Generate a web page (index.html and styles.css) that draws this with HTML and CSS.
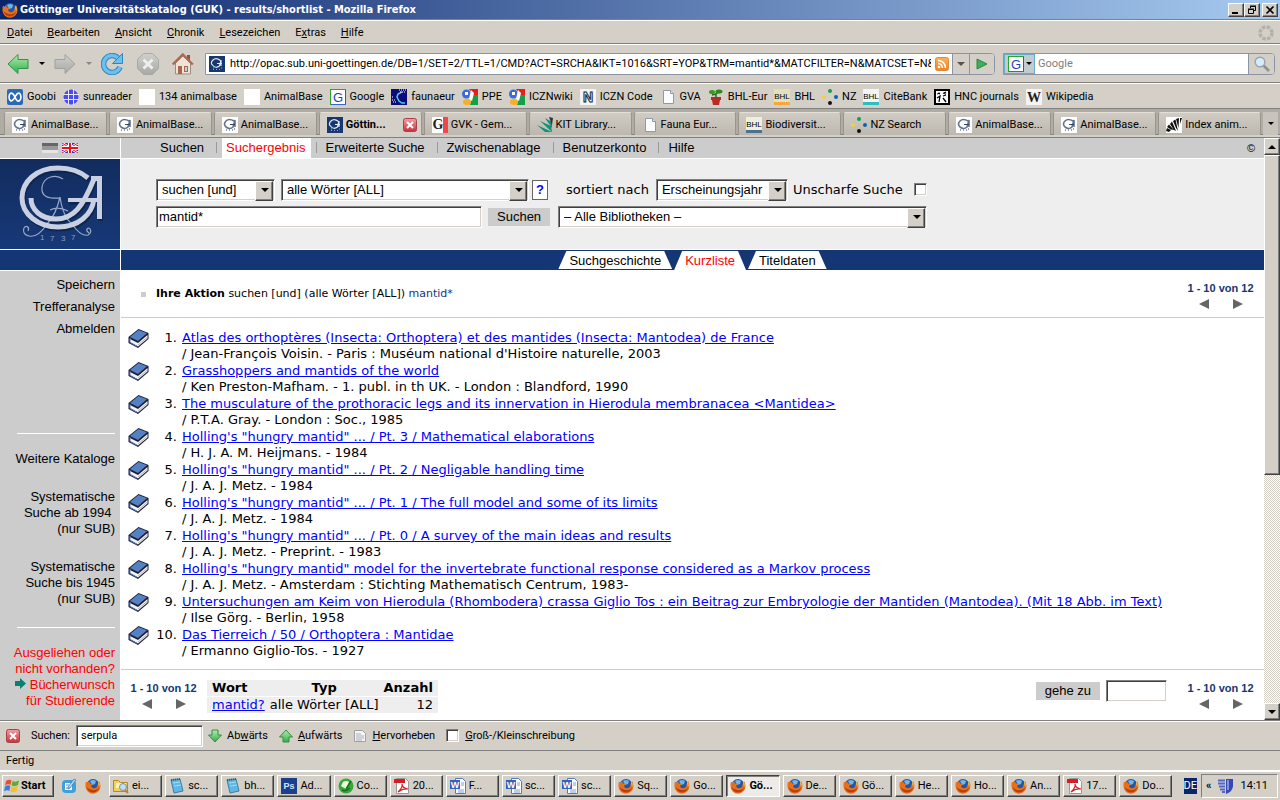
FILE: index.html
```html
<!doctype html>
<html lang="de">
  <head>
    <meta charset="utf-8">
    <title>Göttinger Universitätskatalog (GUK) - results/shortlist</title>
    <link rel="stylesheet" href="styles.css">
  </head>
  <body>
    <svg class="symbols" aria-hidden="true">
      <defs>
        <linearGradient id="g-green" x1="0" y1="0" x2="0" y2="1"><stop offset="0" stop-color="#b5ecb0"/><stop offset="1" stop-color="#2fae4a"/></linearGradient>
        <linearGradient id="g-gray" x1="0" y1="0" x2="0" y2="1"><stop offset="0" stop-color="#d0d0ce"/><stop offset="1" stop-color="#a8a8a6"/></linearGradient>
        <linearGradient id="g-red" x1="0" y1="0" x2="0" y2="1"><stop offset="0" stop-color="#f0a0a4"/><stop offset="1" stop-color="#c8303c"/></linearGradient>
        <linearGradient id="g-rss" x1="0" y1="0" x2="0" y2="1"><stop offset="0" stop-color="#fbb45c"/><stop offset="1" stop-color="#f08020"/></linearGradient>
        <linearGradient id="g-logo" x1="0" y1="0" x2="0" y2="1"><stop offset="0" stop-color="#122c5e"/><stop offset="1" stop-color="#173878"/></linearGradient>
      </defs>
      <symbol id="firefox" viewBox="0 0 16 16">
        <circle cx="8" cy="7.500" r="6.500" fill="#2456a4"/>
        <path d="M5 3q3-2 6 0l-1 3-3 1z" fill="#6fb6ea"/>
        <path d="M1 3.500 2.500 5 4 3.200 5 5.500 8 6 6 8q1 3 4 2 2 0 2.500-3L14 3q1.500 2 1.500 5A7.500 7.500 0 0 1 .5 8.500Q.2 6 1 3.500z" fill="#e8701a"/>
        <path d="M1.500 9Q3 14 8 14.500 13 14 14.500 9 12 12.500 8 12.300 4 12 1.500 9z" fill="#b83c10"/>
        <path d="M13.500 3q1.500 2.500.8 6-.8-2-1-3.500z" fill="#ffd23c"/>
      </symbol>
      <symbol id="sub" viewBox="0 0 16 16">
        <path fill="#17386f" d="M0 0h16v16H0z"/>
        <path d="M11.500 4.500Q7 1 4 4t-.5 5q3 4 7 1l1.500-6v6M8 7.500h5" fill="none" stroke="#dfe6f4" stroke-width="1.200"/>
        <path d="M4 13.500h1m2 0h1m2 0h1m1-1.500h1M4 12h1" stroke="#8fa4cc"/>
      </symbol>
      <symbol id="animal" viewBox="0 0 16 16">
        <path fill="#fff" d="M0 0h16v16H0z"/>
        <path d="M12 4Q7 1 4 4T4 10q4 3 7 0l2-7v7" fill="none" stroke="#65748c" stroke-width="1.600"/>
        <path d="M8 7.500h5M4 13h1m2 0h1m2 0h1m1-1h1" fill="none" stroke="#33415c"/>
      </symbol>
      <symbol id="google" viewBox="0 0 16 16">
        <path fill="#fff" d="M0 0h16v16H0z"/>
        <path fill="#28a828" d="M0 0h16v1H1v15H0z"/><path fill="#d81e1e" d="M15 1h1v14h-1z"/><path fill="#3b62d8" d="M1 15h15v1H1z"/>
      </symbol>
      <symbol id="google9" viewBox="0 0 16 16">
        <path fill="#d4d0c8" d="M0 0h16v16H0z"/>
        <path fill="#ea1c1c" d="M7 0h9v7h-4z"/><path fill="#14a04a" d="M10 6h6v10H8z"/><ellipse cx="4.500" cy="5" rx="4.500" ry="4.500" fill="#3a6be0"/>
        <path fill="#fff" d="M3 3h3v3H3zM9 1l3 3-2 8-3-2z"/><ellipse cx="5" cy="13" rx="4" ry="3" fill="#f8b020"/>
      </symbol>
      <symbol id="page" viewBox="0 0 16 16"><path d="M3.500 1.500h7l3 3v10h-10z" fill="#fafcff" stroke="#8f99a8"/><path d="M10.500 1.500v3h3" fill="#dce4ee" stroke="#8f99a8"/></symbol>
      <symbol id="nz" viewBox="0 0 16 16"><circle cx="8" cy="2" r="2" fill="#12a04a"/><circle cx="2" cy="8" r="2" fill="#f4cf3c"/><circle cx="14" cy="8" r="2" fill="#0b62b4"/><circle cx="8" cy="14" r="2" fill="#111"/></symbol>
      <symbol id="close" viewBox="0 0 14 14"><rect x=".5" y=".5" width="13" height="13" rx="2" fill="url(#g-red)" stroke="#a84048"/><path d="m4 4 6 6m0-6-6 6" stroke="#fff" stroke-width="2"/></symbol>
      <symbol id="folder" viewBox="0 0 16 16"><path d="M.5 2.500h5l2 2h7v9H.5z" fill="#f6cf58" stroke="#b48a28"/><path d="M3 5h10v5H3z" fill="#fff6c0"/><circle cx="10" cy="9" r="3.500" fill="#bfe0f4" stroke="#7890a8"/><path d="m12 12 3 3" stroke="#c08030" stroke-width="2"/></symbol>
      <symbol id="note" viewBox="0 0 16 16"><path d="m2 2 9-1 3 12-9 2z" fill="#5fb8e4" stroke="#3a7fa8"/><path d="m4 5 7-1m-6 4 7-1" stroke="#a6dcf6"/><path d="m2 2 9-1" stroke="#555" stroke-dasharray="1 1" stroke-width="2"/></symbol>
      <symbol id="corel" viewBox="0 0 16 16"><circle cx="8" cy="8" r="7.500" fill="#38a838"/><path d="M5 4q3-2 6 0l-3 7-5-3z" fill="#eaffda"/><path d="m8 11 5-8M4 12q4 2 8-2" stroke="#14701c" fill="none" stroke-width="1.500"/></symbol>
      <symbol id="pdf" viewBox="0 0 16 16"><path d="M2.500.5h9l3 3v12h-12z" fill="#fff" stroke="#999"/><path d="M0 1h11v4H0z" fill="#d81c24"/><path d="M4 14q5-5 4-8 0 4 6 5-5-1-10 3" fill="none" stroke="#d81c24" stroke-width="1.200"/></symbol>
      <symbol id="word" viewBox="0 0 16 16"><path d="M5.500.5h7l3 3v12h-10z" fill="#fff" stroke="#5a78b8"/><path d="M11 5h3m-3 2h3m-6 5h6m-6 2h6" stroke="#7f9cd4"/><path d="M0 2h10v9H0z" fill="#3462b8"/></symbol>
      <symbol id="book" viewBox="0 0 20 21">
        <path d="M0 9 10 1l10 4v6L9.500 20 0 15z" fill="#1c1c34"/>
        <path d="M1.500 9 10 2l8.500 3.300L9.500 13z" fill="#5480c4"/>
        <path d="M1.500 11 9.500 15 19 7v3.500L9.500 18.500 1.500 14z" fill="#f4f4f4"/>
        <path d="M9.500 17 19 9" fill="none" stroke="#b4b4b4"/>
        <path d="M1.500 10v4.500l7 3.700" fill="none" stroke="#5480c4"/>
      </symbol>
      <symbol id="zebra" viewBox="0 0 16 16"><path d="M0 0h16v16H0z" fill="#fff"/><path d="m0 14 1-3 4 2-2 2zM1 10l2-2.500 5 5.500-3-.5zM4 7l2-2.500L10 14l-2-1zM7 4l2.500-1.500L12 14l-2-3zM10 2l3-1-.5 10zM14 1h2l-2 6z" fill="#111"/></symbol>
    </svg>

    <header class="titlebar">
      <svg class="icon"><use href="#firefox"/></svg>
      <h1>Göttinger Universitätskatalog (GUK) - results/shortlist - Mozilla Firefox</h1>
      <div class="window-buttons">
        <button class="bevel" aria-label="Minimieren"><svg viewBox="0 0 12 10"><path d="M2 8h6" stroke="#000" stroke-width="2"/></svg></button>
        <button class="bevel" aria-label="Wiederherstellen"><svg viewBox="0 0 12 10"><path d="M4.500 3V1.500h5v4H8M4 1h6M2.500 4.500h5v4h-5zM2 4h6" fill="none" stroke="#000"/></svg></button>
        <button class="bevel" aria-label="Schließen"><svg viewBox="0 0 12 10"><path d="m2.500 1.500 7 7m0-7-7 7" stroke="#000" stroke-width="1.600"/></svg></button>
      </div>
    </header>

    <nav class="menubar">
      <a href="#"><u>D</u>atei</a>
      <a href="#"><u>B</u>earbeiten</a>
      <a href="#"><u>A</u>nsicht</a>
      <a href="#"><u>C</u>hronik</a>
      <a href="#"><u>L</u>esezeichen</a>
      <a href="#">E<u>x</u>tras</a>
      <a href="#"><u>H</u>ilfe</a>
      <svg class="throbber" viewBox="0 0 16 16"><circle cx="8" cy="8" r="6" fill="none" stroke="#b4b0a8" stroke-width="3.400" stroke-dasharray="3.400 1.310"/></svg>
    </nav>

    <div class="toolbar">
      <button class="tool" aria-label="Zurück"><svg viewBox="0 0 22 22"><path d="M1 11 11 1.500v5h10v9H11v5z" fill="url(#g-green)" stroke="#2f9448"/></svg></button>
      <span class="caret"></span>
      <button class="tool" aria-label="Vor"><svg viewBox="0 0 22 22"><path d="M21 11 11 1.500v5H1v9h10v5z" fill="url(#g-gray)" stroke="#a0a09c"/></svg></button>
      <span class="caret off"></span>
      <button class="tool reload" aria-label="Neu laden"><svg viewBox="0 0 22 22"><path d="M17 5A8.500 8.500 0 1 0 19 14" fill="none" stroke="#2f86c4" stroke-width="5.500"/><path d="M17 5A8.500 8.500 0 1 0 19 14" fill="none" stroke="#6cc0ee" stroke-width="3.500"/><path d="M21.500.5v10h-10z" fill="#6cc0ee" stroke="#2f86c4"/></svg></button>
      <button class="tool stop" aria-label="Stopp"><svg viewBox="0 0 22 22"><path d="M6.500.5h9l6 6v9l-6 6h-9l-6-6v-9z" fill="url(#g-gray)" stroke="#a8a8a4"/><path d="m6.500 6.500 9 9m0-9-9 9" stroke="#eee" stroke-width="3"/></svg></button>
      <button class="tool home" aria-label="Startseite"><svg viewBox="0 0 22 22"><path d="M15 2h3v6h-3z" fill="#a84838"/><path d="M3.500 10 11 3l7.500 7v11h-15z" fill="#efe4d4" stroke="#a08c78"/><path d="m.8 11.500 10-10 10 10" fill="none" stroke="#b06850" stroke-width="2.400"/><path d="M6 13h4v8H6zm6 0h4v6h-4z" fill="#a8664c"/><path d="M13 14h2v4h-2z" fill="#b8d4ec"/></svg></button>
      <form class="urlbar">
        <svg class="icon"><use href="#sub"/></svg>
        <input type="text" aria-label="Adresse" value="http://opac.sub.uni-goettingen.de/DB=1/SET=2/TTL=1/CMD?ACT=SRCHA&amp;IKT=1016&amp;SRT=YOP&amp;TRM=mantid*&amp;MATCFILTER=N&amp;MATCSET=N&amp;NOABS=Y">
        <svg class="rss" viewBox="0 0 14 14"><rect x=".5" y=".5" width="13" height="13" rx="2" fill="url(#g-rss)" stroke="#e88830"/><circle cx="4" cy="10" r="1.300" fill="#fff"/><path d="M3 6.500q4 0 4.500 4.500M3 3.500q7 .5 7.500 7.500" fill="none" stroke="#fff" stroke-width="1.500"/></svg>
        <button type="button" class="drop" aria-label="Verlauf"><span class="caret wide"></span></button>
        <button type="button" class="go" aria-label="Los"><svg viewBox="0 0 12 12"><path d="M1 1v10l10-5z" fill="#3cae5c" stroke="#2c8448"/></svg></button>
      </form>
      <form class="searchbox">
        <button type="button" class="engine" aria-label="Suchmaschine"><svg class="icon" viewBox="0 0 16 16"><use href="#google"/><text x="8" y="13" class="glyph g">G</text></svg><span class="caret"></span></button>
        <input type="text" aria-label="Websuche" placeholder="Google">
        <button type="button" class="lens" aria-label="Suche starten"><svg viewBox="0 0 16 16"><path d="m9 9 6 6" stroke="#909090" stroke-width="2.600"/><circle cx="6" cy="6" r="4.800" fill="#d4ecfa" stroke="#98a4b0" stroke-width="1.400"/></svg></button>
      </form>
    </div>

    <nav class="bookmarks">
      <a href="#"><svg viewBox="0 0 16 16"><rect width="16" height="16" rx="2" fill="#2c68b8"/><path d="M8 8Q6 4 4 4 2 5 2 8t2 4q2 0 4-4t4-4q2 1 2 4t-2 4-4-4" fill="none" stroke="#fff" stroke-width="1.600"/></svg>Goobi</a>
      <a href="#"><svg viewBox="0 0 16 16"><circle cx="8" cy="8" r="7.500" fill="#4a4af0"/><path d="M0 5.500h16M0 10.500h16M5.500 0v16M10.500 0v16" stroke="#e8e8fc"/></svg>sunreader</a>
      <a href="#"><svg viewBox="0 0 16 16"><path d="M0 0h16v16H0z" fill="#fff"/></svg>134 animalbase</a>
      <a href="#"><svg viewBox="0 0 16 16"><path d="M0 0h16v16H0z" fill="#fff"/></svg>AnimalBase</a>
      <a href="#"><svg viewBox="0 0 16 16"><use href="#google"/><text x="8" y="13" class="glyph g">G</text></svg>Google</a>
      <a href="#"><svg viewBox="0 0 16 16"><path d="M0 0h16v16H0z" fill="#0c0c78"/><path d="M11 3 7 5 6 8l2 4 3 2h3" fill="none" stroke="#48d0e8" stroke-width="1.500"/><path d="M1 8h2M1 11h3M2 13h3M8 1h7M9 3h6" stroke="#fff" stroke-dasharray="1 1"/></svg>faunaeur</a>
      <a href="#"><svg><use href="#google9"/></svg>PPE</a>
      <a href="#"><svg><use href="#google9"/></svg>ICZNwiki</a>
      <a href="#"><svg viewBox="0 0 16 16"><path d="M0 0h16v16H0z" fill="#f4f4f4"/><text x="8" y="13" class="glyph iczn">N</text></svg>ICZN Code</a>
      <a href="#"><svg><use href="#page"/></svg>GVA</a>
      <a href="#"><svg viewBox="0 0 16 16"><path d="M3 8h10v3h-1l-1 5H5l-1-5H3z" fill="#b82c24"/><path d="M8 9V4M8 5 4 6M8 4l5-1" stroke="#286c1c" stroke-width="1.500"/><ellipse cx="4" cy="3" rx="3" ry="2" fill="#389828"/><ellipse cx="11" cy="2.500" rx="3.500" ry="2" fill="#2c8820"/></svg>BHL-Eur</a>
      <a href="#"><svg viewBox="0 0 16 16"><path d="M0 0h16v13H0z" fill="#e4e0b8"/><text x="8" y="10" class="glyph bhl">BHL</text><path d="M0 13h16v3H0z" fill="#f8a838"/></svg>BHL</a>
      <a href="#"><svg><use href="#nz"/></svg>NZ</a>
      <a href="#"><svg viewBox="0 0 16 16"><path d="M0 0h16v13H0z" fill="#f4f4f4"/><text x="8" y="10" class="glyph bhl">BHL</text><path d="M0 13h16v3H0z" fill="#28c0c0"/></svg>CiteBank</a>
      <a href="#"><svg viewBox="0 0 16 16"><path d="M1 1h14v14H1z" fill="#fff" stroke="#000" stroke-width="2"/><path d="m3 5 3-1m3 0 3 1M3 9l3-2-1 6M9 7l3-1M9 9l3 4M4 4l2 1m4-1 2-1" stroke="#000" stroke-width="1.300" fill="none"/></svg>HNC journals</a>
      <a href="#"><svg viewBox="0 0 16 16"><path d="M0 0h16v16H0z" fill="#f4f4f4"/><text x="8" y="13" class="glyph wiki">W</text></svg>Wikipedia</a>
    </nav>

    <div class="tabs">
      <button class="tab"><svg><use href="#animal"/></svg>AnimalBase...</button>
      <button class="tab"><svg><use href="#animal"/></svg>AnimalBase...</button>
      <button class="tab"><svg><use href="#animal"/></svg>AnimalBase...</button>
      <button class="tab active"><svg><use href="#sub"/></svg>Göttin...<svg class="x"><use href="#close"/></svg></button>
      <button class="tab"><svg viewBox="0 0 16 16"><path d="M0 0h16v16H0z" fill="#fff"/><path d="M11 0h5v16h-5z" fill="#f04848"/><text x="6" y="12" class="glyph gvk">G</text></svg>GVK - Gem...</button>
      <button class="tab"><svg viewBox="0 0 16 16"><path d="m0 8 15 7H8zM3 4l12 11-1-6zM8 1l7 10V5z" fill="#149078"/><path d="m12 0 4 1-1 7z" fill="#333"/></svg>KIT Library...</button>
      <button class="tab"><svg><use href="#page"/></svg>Fauna Eur...</button>
      <button class="tab"><svg viewBox="0 0 16 16"><path d="M0 0h16v13H0z" fill="#efefdc"/><text x="8" y="10" class="glyph bhl">BHL</text><path d="M0 13h16v3H0z" fill="#4c7090"/></svg>Biodiversit...</button>
      <button class="tab"><svg><use href="#nz"/></svg>NZ Search</button>
      <button class="tab"><svg><use href="#animal"/></svg>AnimalBase...</button>
      <button class="tab"><svg><use href="#animal"/></svg>AnimalBase...</button>
      <button class="tab"><svg><use href="#zebra"/></svg>Index anim...</button>
      <button class="tab-list" aria-label="Alle Tabs"><span class="caret"></span></button>
    </div>

    <div class="viewport">
      <div class="page">
        <div class="languages">
          <svg viewBox="0 0 16 10"><path d="M0 0h16v3H0z" fill="#666"/><path d="M0 3h16v4H0z" fill="#999"/><path d="M0 7h16v3H0z" fill="#e4e4e4"/></svg>
          <a href="#" aria-label="English"><svg viewBox="0 0 16 10"><path d="M0 0h16v10H0z" fill="#3030e0"/><path d="m0 0 16 10M16 0 0 10" stroke="#fff" stroke-width="2.500"/><path d="m0 0 16 10M16 0 0 10" stroke="#f01010"/><path d="M8 0v10M0 5h16" stroke="#fff" stroke-width="4"/><path d="M8 0v10M0 5h16" stroke="#f01010" stroke-width="2"/></svg></a>
        </div>
        <nav class="main-nav">
          <a href="#">Suchen</a>
          <a href="#" class="current">Suchergebnis</a>
          <a href="#">Erweiterte Suche</a>
          <a href="#">Zwischenablage</a>
          <a href="#">Benutzerkonto</a>
          <a href="#">Hilfe</a>
          <span class="copyright">©</span>
        </nav>

        <svg class="logo" viewBox="0 0 120 90">
          <path d="M0 0h120v90H0z" fill="url(#g-logo)"/>
          <g fill="none" stroke="#0e2550" stroke-width="5" transform="translate(1 2)"><path d="M88 19C80 12 70 9 58 9 36 9 22 23 22 39S38 68 58 68C78 68 92 56 94 40"/><path d="M31 39c0 12 10 21 25 21 18 0 27-13 38-40M68 41h31M99.500 18v42"/></g>
          <g fill="none" stroke="#98a8c8" stroke-width="1.200">
            <path d="M63 20C56 15 44 17 42 28c-1 9 5 12 18 11M60 38q-4 18-13 27-9 14-18 12c-6-1-6-6-5-8 2-3 6-1 4 3M60 38q3 20 12 27 9 13 16 11c5-3 2-9-1-6q-1 2 2 4M50 51q8-4 18 1"/>
          </g>
          <g fill="none" stroke="#c8d0e2"><path d="M88 19C80 12 70 9 58 9 36 9 22 23 22 39S38 68 58 68C78 68 92 56 94 40" stroke-width="5"/><path d="M31 39c0 12 10 21 25 21 18 0 27-13 38-40" stroke-width="5"/><path d="M68 41h31" stroke-width="4"/><path d="M99.500 17v43" stroke-width="5"/></g>
          <path d="M91 17h11v5H91z" fill="#c8d0e2"/>
          <text x="40 50 61 71" y="81 82 82 81" fill="#8c9cc0">1737</text>
        </svg>
        <form class="search">
          <div class="search-row">
            <span class="select op"><select aria-label="Verknüpfung"><option>suchen [und]</option></select></span>
            <span class="select key"><select aria-label="Suchschlüssel"><option>alle Wörter [ALL]</option></select></span>
            <button type="button" class="help">?</button>
            <label class="sort-label" for="sort">sortiert nach</label>
            <span class="select sort"><select id="sort"><option>Erscheinungsjahr</option></select></span>
            <label class="fuzzy-label" for="fuzzy">Unscharfe Suche</label>
            <input type="checkbox" id="fuzzy">
          </div>
          <div class="search-row">
            <input type="text" class="field term" aria-label="Suchbegriff" value="mantid*">
            <button type="button" class="flat">Suchen</button>
            <span class="select library"><select aria-label="Bibliothek"><option>– Alle Bibliotheken –</option></select></span>
          </div>
        </form>

        <div class="bar"></div>
        <nav class="bar view-tabs">
          <a href="#">Suchgeschichte</a>
          <a href="#" class="current">Kurzliste</a>
          <a href="#">Titeldaten</a>
        </nav>

        <aside class="sidebar">
          <a href="#" class="action">Speichern</a>
          <a href="#" class="action">Trefferanalyse</a>
          <a href="#" class="action">Abmelden</a>
          <hr class="first">
          <a href="#" class="catalogs">Weitere Kataloge</a>
          <a href="#">Systematische<br>Suche ab 1994&nbsp;<br>(nur SUB)</a>
          <a href="#">Systematische<br>Suche bis 1945<br>(nur SUB)</a>
          <hr>
          <a href="#" class="wish">Ausgeliehen oder<br>nicht vorhanden?<br><svg viewBox="0 0 11 11"><path d="M0 3h5V0l6 5.500L5 11V8H0z" fill="#0c8070"/></svg> Bücherwunsch<br>für Studierende</a>
        </aside>

        <main>
          <div class="summary">
            <p><b>Ihre Aktion</b> suchen [und] (alle Wörter [ALL]) <span>mantid*</span></p>
            <div class="pager">1 - 10 von 12
              <div><a href="#" class="prev" aria-label="Zurück"></a><a href="#" class="next" aria-label="Weiter"></a></div>
            </div>
          </div>
          <ol class="results">
            <li><svg><use href="#book"/></svg><span class="number">1.</span><div><a href="#">Atlas des orthoptères (Insecta: Orthoptera) et des mantides (Insecta: Mantodea) de France</a><br>/ Jean-François Voisin. - Paris : Muséum national d'Histoire naturelle, 2003</div></li>
            <li><svg><use href="#book"/></svg><span class="number">2.</span><div><a href="#">Grasshoppers and mantids of the world</a><br>/ Ken Preston-Mafham. - 1. publ. in th UK. - London : Blandford, 1990</div></li>
            <li><svg><use href="#book"/></svg><span class="number">3.</span><div><a href="#">The musculature of the prothoracic legs and its innervation in Hierodula membranacea &lt;Mantidea&gt;</a><br>/ P.T.A. Gray. - London : Soc., 1985</div></li>
            <li><svg><use href="#book"/></svg><span class="number">4.</span><div><a href="#">Holling's "hungry mantid" ... / Pt. 3 / Mathematical elaborations</a><br>/ H. J. A. M. Heijmans. - 1984</div></li>
            <li><svg><use href="#book"/></svg><span class="number">5.</span><div><a href="#">Holling's "hungry mantid" ... / Pt. 2 / Negligable handling time</a><br>/ J. A. J. Metz. - 1984</div></li>
            <li><svg><use href="#book"/></svg><span class="number">6.</span><div><a href="#">Holling's "hungry mantid" ... / Pt. 1 / The full model and some of its limits</a><br>/ J. A. J. Metz. - 1984</div></li>
            <li><svg><use href="#book"/></svg><span class="number">7.</span><div><a href="#">Holling's "hungry mantid" ... / Pt. 0 / A survey of the main ideas and results</a><br>/ J. A. J. Metz. - Preprint. - 1983</div></li>
            <li><svg><use href="#book"/></svg><span class="number">8.</span><div><a href="#">Holling's "hungry mantid" model for the invertebrate functional response considered as a Markov process</a><br>/ J. A. J. Metz. - Amsterdam : Stichting Mathematisch Centrum, 1983-</div></li>
            <li><svg><use href="#book"/></svg><span class="number">9.</span><div><a href="#">Untersuchungen am Keim von Hierodula (Rhombodera) crassa Giglio Tos : ein Beitrag zur Embryologie der Mantiden (Mantodea). (Mit 18 Abb. im Text)</a><br>/ Ilse Görg. - Berlin, 1958</div></li>
            <li><svg><use href="#book"/></svg><span class="number">10.</span><div><a href="#">Das Tierreich / 50 / Orthoptera : Mantidae</a><br>/ Ermanno Giglio-Tos. - 1927</div></li>
          </ol>
          <div class="footer">
            <div class="pager">1 - 10 von 12
              <div><a href="#" class="prev" aria-label="Zurück"></a><a href="#" class="next" aria-label="Weiter"></a></div>
            </div>
            <table class="terms">
              <thead><tr><th>Wort</th><th class="type">Typ</th><th class="count">Anzahl</th></tr></thead>
              <tbody><tr><td><a href="#">mantid?</a></td><td>alle Wörter [ALL]</td><td class="count">12</td></tr></tbody>
            </table>
            <form class="goto">
              <button type="button" class="flat">gehe zu</button>
              <input type="text" class="field" aria-label="Treffernummer">
            </form>
            <div class="pager">1 - 10 von 12
              <div><a href="#" class="prev" aria-label="Zurück"></a><a href="#" class="next" aria-label="Weiter"></a></div>
            </div>
          </div>
        </main>
      </div>
      <div class="scrollbar">
        <button class="bevel" aria-label="Nach oben"><span class="caret up wide"></span></button>
        <div class="bevel thumb"></div>
        <button class="bevel end" aria-label="Nach unten"><span class="caret wide"></span></button>
      </div>
    </div>

    <form class="findbar">
      <button type="button" aria-label="Suchleiste schließen"><svg viewBox="0 0 14 14"><use href="#close"/></svg></button>
      <label for="find">Suchen:</label>
      <input type="text" id="find" class="field" value="serpula">
      <button type="button"><svg viewBox="0 0 14 14"><path d="M4 1h6v5h3.500L7 13 .5 6H4z" fill="url(#g-green)" stroke="#348c44"/></svg><span>Ab<u>w</u>ärts</span></button>
      <button type="button"><svg viewBox="0 0 14 14"><path d="M4 13h6V8h3.500L7 1 .5 8H4z" fill="url(#g-green)" stroke="#348c44"/></svg><span><u>A</u>ufwärts</span></button>
      <button type="button"><svg viewBox="0 0 14 14"><path d="M1.500 1.500h8l3 3v8h-11z" fill="#f4f4f4" stroke="#a0a0a0"/><path d="M3 5h5M3 7h8M3 9h8M3 11h6" stroke="#a8b0bc"/></svg><span><u>H</u>ervorheben</span></button>
      <input type="checkbox" id="case">
      <label for="case"><u>G</u>roß-/Kleinschreibung</label>
    </form>

    <div class="status">Fertig</div>

    <footer class="taskbar">
      <button class="bevel start"><svg viewBox="0 0 16 16"><path d="M2 3q3-2 5.500-.5L6.500 7Q4 5.500 1 7.500z" fill="#e8502c"/><path d="M8.500 3q3 1.500 6.500-.5L14 7q-3 2-6.500.5z" fill="#58b030"/><path d="M1 8.500Q4 6.500 6.300 8L5.300 13Q3 11.500 0 13.500z" fill="#3c78e0"/><path d="M7.300 8.500q3 1.500 6.500-.5l-1 5q-3 2-6.500.5z" fill="#f8c020"/></svg>Start</button>
      <a href="#" class="quick" aria-label="Desktop"><svg viewBox="0 0 16 16"><rect x="1" y="2" width="14" height="13" rx="4" fill="#3ca0dc"/><path d="M4 5h7v7H4z" fill="#fff"/><path d="m7 9 6-8 2 1-6 8-2 1z" fill="#b8dcf4" stroke="#2c70b0" stroke-width=".7"/><path d="M5 7h3m-3 3h4" stroke="#6090b0"/></svg></a>
      <a href="#" class="quick" aria-label="Firefox"><svg><use href="#firefox"/></svg></a>
      <div class="tasks">
        <button class="bevel"><svg><use href="#folder"/></svg>ei...</button>
        <button class="bevel"><svg><use href="#note"/></svg>sc...</button>
        <button class="bevel"><svg><use href="#note"/></svg>bh...</button>
        <button class="bevel"><svg viewBox="0 0 16 16"><path d="M0 0h16v16H0z" fill="#1c3f8c"/><text x="8" y="11" class="glyph ps">Ps</text></svg>Ad...</button>
        <button class="bevel"><svg><use href="#corel"/></svg>Co...</button>
        <button class="bevel"><svg><use href="#pdf"/></svg>20...</button>
        <button class="bevel"><svg viewBox="0 0 16 16"><use href="#word"/><text x="5" y="10" class="glyph word">W</text></svg>F...</button>
        <button class="bevel"><svg viewBox="0 0 16 16"><use href="#word"/><text x="5" y="10" class="glyph word">W</text></svg>sc...</button>
        <button class="bevel"><svg viewBox="0 0 16 16"><use href="#word"/><text x="5" y="10" class="glyph word">W</text></svg>sc...</button>
        <button class="bevel"><svg><use href="#firefox"/></svg>Sq...</button>
        <button class="bevel"><svg><use href="#firefox"/></svg>Go...</button>
        <button class="bevel pressed"><svg><use href="#firefox"/></svg>Gö...</button>
        <button class="bevel"><svg><use href="#firefox"/></svg>De...</button>
        <button class="bevel"><svg><use href="#firefox"/></svg>Gö...</button>
        <button class="bevel"><svg><use href="#firefox"/></svg>He...</button>
        <button class="bevel"><svg><use href="#firefox"/></svg>Ho...</button>
        <button class="bevel"><svg><use href="#firefox"/></svg>An...</button>
        <button class="bevel"><svg><use href="#pdf"/></svg>17...</button>
        <button class="bevel"><svg><use href="#firefox"/></svg>Do...</button>
      </div>
      <span class="locale">DE</span>
      <div class="tray"><b>«</b><svg viewBox="0 0 16 16"><path d="M8 1h7v7q0 5-7 8z" fill="#3848b0"/><path d="M0 2.500h7M0 5.500h7M1 8.500h6M2 11.500h5M4 14h3" stroke="#5468cc" stroke-width="2"/><path d="M10 2v10" stroke="#8090e4" stroke-width="2"/></svg><time>14:11</time></div>
    </footer>
  </body>
</html>
```
FILE: styles.css
```css
* {
  box-sizing: border-box;
}
body {
  margin: 0;
  min-height: 100vh;
  display: flex;
  flex-direction: column;
  background: #d4d0c8;
  color: #000;
  font: 11px/16px Roboto, "Liberation Sans", sans-serif;
  white-space: nowrap;
}
a {
  color: inherit;
  text-decoration: none;
}
button, input, select {
  margin: 0;
  padding: 0;
  border: 0;
  border-radius: 0;
  background: none;
  color: inherit;
  font: inherit;
}
svg {
  display: block;
  flex: none;
  width: 16px;
  height: 16px;
}
.symbols {
  position: absolute;
  width: 0;
  height: 0;
}

/* letters inside the small icons */
.glyph {
  text-anchor: middle;
}
.glyph.g {
  font: 13px "Liberation Sans", sans-serif;
  fill: #1f3fc0;
}
.glyph.bhl {
  font: 8px "Liberation Sans", sans-serif;
  fill: #000;
}
.glyph.ps {
  font: bold 9px "Liberation Sans", sans-serif;
  fill: #cfe4ff;
}
.glyph.word {
  font: bold 9px "Liberation Sans", sans-serif;
  fill: #fff;
}
.glyph.iczn {
  font: bold 14px "Liberation Sans", sans-serif;
  fill: #fff;
  stroke: #222;
}
.glyph.wiki, .glyph.gvk {
  font: bold 14px "Liberation Serif", serif;
  fill: #222;
}

.bevel {
  display: flex;
  align-items: center;
  background: #d4d0c8;
  border: 1px solid;
  border-color: #fff #404040 #404040 #fff;
  box-shadow: inset -1px -1px #808080;
}
.caret {
  display: block;
  flex: none;
  border: 3px solid transparent;
  border-top-color: #000;
  border-bottom: 0;
}
.caret.wide {
  border-width: 4px;
  border-bottom: 0;
}
.caret.up {
  border-bottom: 4px solid #000;
  border-top: 0;
}
.caret.off {
  border-top-color: #888;
}

/* sunken form fields */
.field {
  height: 22px;
  padding: 0 2px;
  background: #fff;
  border: 1px solid;
  border-color: #808080 #fff #fff #808080;
  box-shadow: inset 1px 1px #404040, inset -1px -1px #d4d0c8;
}
input[type=checkbox] {
  appearance: none;
  width: 13px;
  height: 13px;
  background: #fff;
  border: 1px solid;
  border-color: #808080 #fff #fff #808080;
  box-shadow: inset 1px 1px #404040, inset -1px -1px #d4d0c8;
}

.titlebar {
  display: flex;
  align-items: center;
  height: 19px;
  padding: 0 2px;
  background: linear-gradient(90deg, #0a246a, #a6caf0);
  color: #fff;
}
.titlebar h1 {
  flex: 1;
  margin: 0 0 0 2px;
  font: bold 11px/16px "DejaVu Sans Condensed", "DejaVu Sans", sans-serif;
}
.window-buttons {
  display: flex;
}
.window-buttons button {
  width: 16px;
  height: 14px;
  padding: 1px;
}
.window-buttons button:last-child {
  margin-left: 2px;
}
.window-buttons svg {
  width: 12px;
  height: 10px;
}

.menubar {
  display: flex;
  align-items: center;
  height: 25px;
  padding: 2px 6px 0 7px;
  border-top: 1px solid #808080;
  border-bottom: 1px solid #808080;
  box-shadow: inset 0 1px #fff;
  gap: 15px;
}
.throbber {
  margin-left: auto;
}

.toolbar {
  display: flex;
  align-items: center;
  height: 39px;
  padding: 0 5px 0 7px;
  border-top: 1px solid #fff;
  border-bottom: 1px solid #808080;
}
.toolbar .tool svg {
  width: 22px;
  height: 22px;
}
.toolbar > .caret {
  margin: 0 9px 0 10px;
}
.toolbar .stop {
  margin: 0 13px 0 14px;
}
.urlbar, .searchbox {
  display: flex;
  align-items: center;
  height: 22px;
  background: #fff;
  border: 1px solid #8c94a4;
  border-radius: 0 4px 4px 0;
  overflow: hidden;
}
.urlbar {
  flex: 1;
  min-width: 0;
  margin: 0 8px 0 11px;
  padding-left: 3px;
}
.urlbar input, .searchbox input {
  flex: 1;
  min-width: 0;
  outline: 0;
}
.urlbar input {
  margin: 0 4px 0 5px;
}
.searchbox input {
  padding-left: 3px;
}
.searchbox input::placeholder {
  color: #808080;
}
.rss {
  width: 14px;
  height: 14px;
  margin-right: 3px;
}
.drop, .go, .engine, .lens {
  display: flex;
  align-items: center;
  justify-content: center;
  align-self: stretch;
  background: #d4d0c8;
  border-left: 1px solid #8c94a4;
}
.drop {
  width: 17px;
}
.drop .caret {
  border-top-color: #555;
}
.go {
  width: 25px;
}
.go svg {
  width: 12px;
  height: 12px;
}
.searchbox {
  width: 272px;
}
.engine {
  width: 31px;
  gap: 2px;
  background: #c0ccd0;
  border: 1px solid #6aaccc;
}
.lens {
  width: 26px;
}

.bookmarks {
  display: flex;
  align-items: center;
  height: 26px;
  padding: 2px 7px 0;
  border-top: 1px solid #fff;
  border-bottom: 1px solid #808080;
  gap: 7px;
  overflow: hidden;
}
.bookmarks a {
  display: flex;
  align-items: center;
  gap: 4px;
}

.tabs {
  display: flex;
  height: 29px;
  padding: 3px 2px 3px 4px;
  background: linear-gradient(#b0aca4 0 25px, #808080 25px 26px, #d4d0c8 26px 28px, #808080 28px);
  gap: 2px;
}
.tab {
  display: flex;
  flex: 1 1 0;
  align-items: center;
  min-width: 0;
  padding: 1px 4px 0 7px;
  background: linear-gradient(#d0ccc4, #bcb8b0);
  border: 1px solid #99958d;
  border-top-color: #e4e0d8;
  border-bottom: 0;
  border-radius: 3px 3px 0 0;
  gap: 3px;
}
.tab.active {
  background: #d4d0c8;
  font-weight: bold;
}
.tab .x {
  width: 14px;
  height: 14px;
  margin-left: auto;
}
.tab-list {
  display: flex;
  align-items: center;
  justify-content: center;
  width: 15px;
  background: #c8c4bc;
}

.viewport {
  display: flex;
  flex: 1;
}
.page {
  display: grid;
  flex: 1;
  grid-template-columns: 120px 1fr;
  grid-template-rows: 20px 90px 20px 1fr;
  gap: 1px;
  min-width: 0;
  background: #fff;
  font: 13px/16px "Liberation Sans", Arial, sans-serif;
}
.languages {
  display: flex;
  align-items: center;
  justify-content: center;
  background: #ccc;
  gap: 4px;
}
.languages svg {
  width: 16px;
  height: 10px;
}
.main-nav {
  display: flex;
  align-items: center;
  padding: 0 9px 0 30px;
  background: #ccc;
}
.main-nav a {
  line-height: 20px;
  padding: 0 12px 0 9px;
}
.main-nav a + a::before {
  content: "";
  display: inline-block;
  height: 11px;
  margin: 0 9px 0 -10px;
  border-left: 1px solid #999;
  vertical-align: -1px;
}
.main-nav a + a {
  padding: 0 12px 0 10px;
}
.main-nav a.current {
  margin: 0 5px 0 6px;
  padding: 0 5px 0 4px;
  background: #fff;
  color: #f00;
}
.copyright {
  margin-left: auto;
  font-size: 11px;
}
.logo {
  width: 120px;
  height: 90px;
}
.logo text {
  font: 8px "Liberation Sans", sans-serif;
}

.search {
  display: flex;
  flex-direction: column;
  justify-content: center;
  padding: 0 35px 2px;
  background: #eee;
  gap: 5px;
}
.search-row {
  display: flex;
  align-items: center;
}
.search label, .results, .terms {
  font: 13px/16px "DejaVu Sans", Verdana, sans-serif;
}
.select {
  position: relative;
  height: 22px;
  background: #fff;
  border: 1px solid;
  border-color: #808080 #fff #fff #808080;
  box-shadow: inset 1px 1px #404040, inset -1px -1px #d4d0c8;
}
.select select {
  appearance: none;
  width: 100%;
  height: 20px;
  padding: 0 20px 0 5px;
}
.select::before {
  content: "";
  position: absolute;
  top: 1px;
  right: 1px;
  width: 16px;
  height: 18px;
  background: #d4d0c8;
  border: 1px solid;
  border-color: #fff #404040 #404040 #fff;
  box-shadow: inset -1px -1px #808080;
  pointer-events: none;
}
.select::after {
  content: "";
  position: absolute;
  top: 8px;
  right: 5px;
  border: 4px solid transparent;
  border-top-color: #000;
  border-bottom: 0;
  pointer-events: none;
}
.op {
  width: 119px;
  margin-right: 6px;
}
.key {
  width: 248px;
  margin-right: 3px;
}
.sort {
  width: 132px;
}
.library {
  width: 369px;
  margin-left: 8px;
}
.help {
  width: 16px;
  height: 20px;
  background: #fff;
  border: 1px solid #666;
  color: #00f;
  font-weight: bold;
}
.sort-label {
  margin: 0 7px 0 18px;
}
.fuzzy-label {
  margin: 0 11px 0 5px;
}
.term {
  width: 326px;
  margin-right: 6px;
}
.flat {
  height: 18px;
  padding: 0 9px;
  background: #ccc;
}

.bar {
  background: #153675;
}
.view-tabs {
  display: flex;
  justify-content: center;
  padding: 1px 0;
  gap: 2px;
}
.view-tabs a {
  height: 18px;
  padding: 2px 11px 0;
  background: #fff;
  clip-path: polygon(8px 0, calc(100% - 8px) 0, 100% 100%, 0 100%);
}
.view-tabs a.current {
  height: 19px;
  color: #f00;
}

.sidebar {
  display: flex;
  flex-direction: column;
  padding: 3px 5px 10px 0;
  background: #ccc;
  text-align: right;
}
.sidebar .action {
  line-height: 22px;
}
.sidebar a + a:not(.action) {
  margin-top: 22px;
}
.sidebar hr {
  width: 98px;
  margin: 20px 0 17px auto;
  border: 0;
  border-top: 1px solid #fff;
}
.sidebar hr.first {
  margin-top: 93px;
}
.sidebar .wish {
  color: #f00;
}
.sidebar svg {
  display: inline-block;
  width: 11px;
  height: 11px;
}

main {
  min-width: 0;
}
.summary {
  display: flex;
  align-items: flex-start;
  height: 47px;
  padding: 9px 10px 0 20px;
  border-bottom: 1px solid #ccc;
}
.summary p {
  flex: 1;
  margin: 6px 0 0;
  font: 11px/16px "DejaVu Sans", Verdana, sans-serif;
}
.summary p::before {
  content: "";
  display: inline-block;
  width: 5px;
  height: 5px;
  margin-right: 10px;
  background: #ccc;
}
.summary p span {
  color: #153675;
}
.pager {
  width: 67px;
  color: #153675;
  font-size: 11px;
  font-weight: bold;
  text-align: center;
}
.pager div {
  display: flex;
  justify-content: center;
  margin-top: 3px;
  gap: 24px;
}
.prev, .next {
  border: 5px solid transparent;
}
.prev {
  border-left: 0;
  border-right: 10px solid #666;
}
.next {
  border-right: 0;
  border-left: 10px solid #666;
}

.results {
  margin: 0;
  padding: 12px 0 9px 7px;
  border-bottom: 1px solid #ccc;
  list-style: none;
}
.results li {
  display: flex;
  height: 33px;
}
.results svg {
  width: 21px;
  height: 21px;
  margin-top: -2px;
}
.number {
  width: 28px;
  margin-right: 5px;
  text-align: right;
}
.results a, .terms a {
  color: #00f;
  text-decoration: underline;
}

.footer {
  display: flex;
  align-items: flex-start;
  padding: 10px 10px 0 9px;
}
.terms {
  margin-left: 10px;
  background: #eee;
  border-collapse: collapse;
}
.terms td, .terms th {
  padding: 0 5px 0 0;
  text-align: left;
}
.terms th {
  border-bottom: 1px solid #fff;
}
.terms td:first-child, .terms th:first-child {
  padding-left: 5px;
}
.terms th.type {
  text-align: center;
}
.terms .count {
  text-align: right;
}
.goto {
  display: flex;
  align-items: center;
  margin: 0 20px 0 auto;
  gap: 6px;
}
.goto .field {
  width: 61px;
}

.scrollbar {
  display: flex;
  flex-direction: column;
  width: 16px;
  background: repeating-conic-gradient(#fff 0 25%, #d4d0c8 0 50%) 0 0 / 2px 2px;
}
.scrollbar button {
  justify-content: center;
  height: 17px;
}
.scrollbar .thumb {
  height: 320px;
}
.scrollbar .end {
  margin-top: auto;
}

.findbar {
  display: flex;
  align-items: center;
  height: 30px;
  padding: 0 6px;
  border-top: 1px solid #808080;
  box-shadow: inset 0 1px #fff;
}
.findbar button {
  display: flex;
  align-items: center;
  margin-right: 11px;
  gap: 5px;
}
.findbar svg {
  width: 14px;
  height: 14px;
}
.findbar .field {
  width: 127px;
  margin: 0 5px 0 6px;
  padding: 0 4px;
}
.findbar input[type=checkbox] {
  margin-right: 6px;
}
.status {
  height: 21px;
  padding: 2px 6px 0;
  border-top: 1px solid #808080;
  border-bottom: 1px solid #fff;
}

.taskbar {
  display: flex;
  align-items: center;
  height: 29px;
  padding: 0 2px;
  border-top: 1px solid #fff;
}
.taskbar .bevel {
  height: 22px;
  padding: 0 3px;
  gap: 3px;
}
.taskbar .start {
  width: 52px;
  margin-right: 7px;
  padding: 0 1px;
  gap: 1px;
  font-weight: bold;
}
.quick {
  margin-right: 8px;
}
.tasks {
  display: flex;
  flex: 1;
  min-width: 0;
  gap: 3px;
}
.tasks .bevel {
  flex: 1 1 0;
  min-width: 0;
}
.tasks .pressed {
  background: #ecebe7;
  border-color: #404040 #fff #fff #404040;
  box-shadow: inset 1px 1px #808080;
  font-weight: bold;
}
.locale {
  margin: 0 4px 0 11px;
  background: #0a246a;
  color: #fff;
}
.tray {
  display: flex;
  align-items: center;
  justify-content: space-between;
  width: 77px;
  height: 24px;
  padding: 0 9px 0 4px;
  border: 1px solid;
  border-color: #808080 #fff #fff #808080;
}
```
